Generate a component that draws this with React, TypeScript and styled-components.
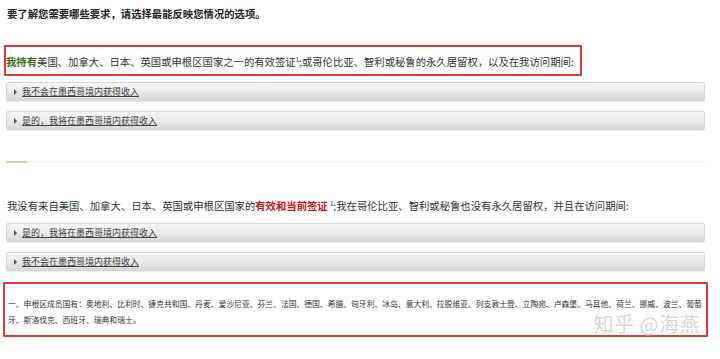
import styled, { createGlobalStyle } from 'styled-components'

const GlobalStyle = createGlobalStyle`
  html, body {
    margin: 0;
    padding: 0;
    background: #fff;
    overflow: hidden;
  }
  body {
    font-family: "Noto Sans CJK SC", "Liberation Sans", sans-serif;
    color: #333;
  }
`

const Page = styled.main`
  display: flex;
  flex-direction: column;
  padding: 7px 15px 0 6px;
  width: 720px;
  box-sizing: border-box;
`

const Heading = styled.h1`
  margin: 0 0 24px 1px;
  font-size: 10.35px;
  line-height: 14px;
  font-weight: 700;
  color: #222;
`

const Marked = styled.div<{ $fit?: boolean }>`
  position: relative;
  align-self: ${p => (p.$fit ? 'flex-start' : 'stretch')};
  border: 2px solid #d93a3d;
  border-radius: 1px;
  box-sizing: border-box;
`

const Lead = styled.p<{ $top?: number }>`
  margin: 0;
  padding: ${p => p.$top ?? 0}px 6px 0 0;
  font-size: 10.35px;
  line-height: 14px;
  white-space: nowrap;
  color: #333;
`

const Green = styled.b`
  color: #3d6e1f;
`

const Red = styled.b`
  color: #c81414;
`

const Sup = styled.sup`
  font-size: 6px;
  line-height: 0;
`

const Options = styled.div<{ $top: number; $bottom?: number }>`
  display: flex;
  flex-direction: column;
  gap: 10px;
  margin-top: ${p => p.$top}px;
  margin-bottom: ${p => p.$bottom ?? 0}px;
`

const Option = styled.div`
  display: flex;
  align-items: center;
  gap: 5px;
  height: 19px;
  padding-left: 7px;
  box-sizing: border-box;
  border: 1px solid #d6d6d6;
  border-radius: 2px;
  background: linear-gradient(to bottom, #f7f7f7 0%, #ececec 45%, #d8d8d8 100%);
  box-shadow: 0 1px 1px rgba(0, 0, 0, 0.08);
`

const Arrow = styled.span`
  width: 0;
  height: 0;
  border-top: 3px solid transparent;
  border-bottom: 3px solid transparent;
  border-left: 3.5px solid #555;
`

const OptionLabel = styled.span`
  font-size: 9px;
  line-height: 12px;
  color: #444;
  text-decoration: underline;
  text-underline-offset: 1px;
`

const Divider = styled.div`
  display: flex;
  height: 2px;
  margin-bottom: 36px;
`

const DividerAccent = styled.span`
  width: 21px;
  background: #dccaa8;
`

const DividerRest = styled.span`
  flex: 1;
  height: 1px;
  background: #f4f4f4;
`

const Footnote = styled(Marked)`
  margin: 0 -3px;
  height: 55px;
  padding: 12px 0 0 3px;
`

const FootText = styled.p`
  margin: 0;
  width: 697px;
  font-size: 7.8px;
  line-height: 16px;
  color: #333;
`

const Watermark = styled.span`
  position: absolute;
  right: 6px;
  bottom: 1px;
  font-size: 20px;
  line-height: 20px;
  color: #d6d6d6;
  letter-spacing: 0.5px;
  text-shadow: 0 0 1px #fff;
`

const Choice = ({ label }: { label: string }) => (
  <Option>
    <Arrow />
    <OptionLabel>{label}</OptionLabel>
  </Option>
)

const App = () => (
  <>
    <GlobalStyle />
    <Page>
      <Heading>要了解您需要哪些要求，请选择最能反映您情况的选项。</Heading>

      <Marked $fit style={{ marginLeft: -2 }}>
        <Lead $top={8} style={{ height: 19 }}>
          <Green>我持有</Green>美国、加拿大、日本、英国或申根区国家之一的有效签证<Sup>1</Sup>;或哥伦比亚、智利或秘鲁的永久居留权，以及在我访问期间:
        </Lead>
      </Marked>

      <Options $top={6} $bottom={31}>
        <Choice label="我不会在墨西哥境内获得收入" />
        <Choice label="是的，我将在墨西哥境内获得收入" />
      </Options>

      <Divider>
        <DividerAccent />
        <DividerRest />
      </Divider>

      <Lead style={{ paddingLeft: 1 }}>
        我没有来自美国、加拿大、日本、英国或申根区国家的<Red>有效和当前签证</Red> <Sup>1</Sup>;我在哥伦比亚、智利或秘鲁也没有永久居留权，并且在访问期间:
      </Lead>

      <Options $top={10} $bottom={11}>
        <Choice label="是的，我将在墨西哥境内获得收入" />
        <Choice label="我不会在墨西哥境内获得收入" />
      </Options>

      <Footnote>
        <FootText>
          一、申根区成员国有：奥地利、比利时、捷克共和国、丹麦、爱沙尼亚、芬兰、法国、德国、希腊、匈牙利、冰岛、意大利、拉脱维亚、列支敦士登、立陶宛、卢森堡、马耳他、荷兰、挪威、波兰、葡萄牙、斯洛伐克、西班牙、瑞典和瑞士。
        </FootText>
        <Watermark>知乎 @海燕</Watermark>
      </Footnote>
    </Page>
  </>
)

export default App
